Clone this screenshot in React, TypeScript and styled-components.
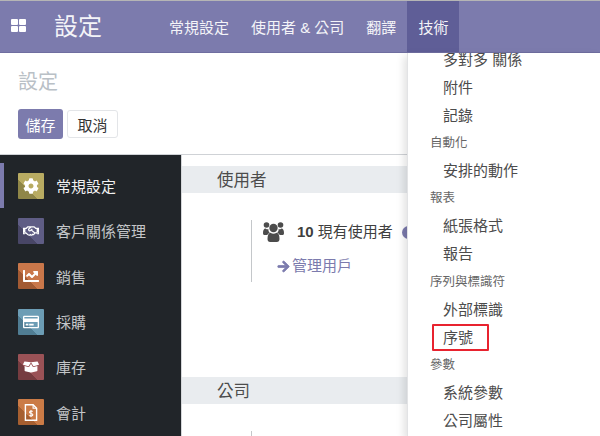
import React from 'react';
import styled, { createGlobalStyle } from 'styled-components';
import {
  FaArrowRight,
  FaBoxOpen,
  FaChartLine,
  FaCog,
  FaRegCreditCard,
  FaRegHandshake,
} from 'react-icons/fa';

const GlobalStyle = createGlobalStyle`
  html, body {
    margin: 0;
    padding: 0;
    background: #fff;
  }
  body {
    font-family: "Liberation Sans", "Noto Sans CJK TC", sans-serif;
    color: #4c4c4c;
  }
`;

const sidebarItems = [
  { label: '常規設定', tone: '#b8ab62', toneDark: '#8f8648', icon: <FaCog />, active: true },
  { label: '客戶關係管理', tone: '#5f5d85', toneDark: '#484666', icon: <FaRegHandshake /> },
  { label: '銷售', tone: '#c9774a', toneDark: '#a25a33', icon: <FaChartLine /> },
  { label: '採購', tone: '#6c9db5', toneDark: '#507d93', icon: <FaRegCreditCard /> },
  { label: '庫存', tone: '#9a5256', toneDark: '#763c40', icon: <FaBoxOpen /> },
  { label: '會計', tone: '#cb7b46', toneDark: '#a65f30', icon: <InvoiceIcon /> },
];

const menuEntries = [
  { label: '多對多 關係' },
  { label: '附件' },
  { label: '記錄' },
  { label: '自動化', header: true },
  { label: '安排的動作' },
  { label: '報表', header: true },
  { label: '紙張格式' },
  { label: '報告' },
  { label: '序列與標識符', header: true },
  { label: '外部標識' },
  { label: '序號', marked: true },
  { label: '參數', header: true },
  { label: '系統參數' },
  { label: '公司屬性' },
];

function InvoiceIcon() {
  return (
    <svg viewBox='0 0 20 24' width='14' height='17' fill='none'>
      <path d='M2 1h11l5 5v17H2z' stroke='#fff' strokeWidth='2' />
      <path d='M13 1v5h5' stroke='#fff' strokeWidth='1.6' />
      <path
        d='M12.5 10.5c-.6-.9-4.5-1.2-4.6 1 0 2.300 4.800 1.400 4.800 3.700 0 2.200-4 2-5 1M10 8.500v10'
        stroke='#fff'
        strokeWidth='1.500'
      />
    </svg>
  );
}

function AppsIcon() {
  return (
    <svg viewBox='0 0 15 13' width='15' height='13' fill='#fff'>
      <rect x='0' y='0' width='7' height='6' rx='1' />
      <rect x='8' y='0' width='7' height='6' rx='1' />
      <rect x='0' y='7' width='7' height='6' rx='1' />
      <rect x='8' y='7' width='7' height='6' rx='1' />
    </svg>
  );
}

function UsersIcon() {
  return (
    <svg viewBox='0 0 21 20' width='21' height='20' fill='#4c4c4c'>
      <circle cx='3.500' cy='3' r='2.800' />
      <circle cx='17.500' cy='3' r='2.800' />
      <path d='M0 11c0-3 1-4.500 2.500-4.500 1 .8 2 1 3 .8-.3 1.500.3 2.600 1.300 3.400-1 .4-2 1.200-2.500 2.300H1.200C.4 12.900 0 12.200 0 11z' />
      <path d='M21 11c0-3-1-4.500-2.500-4.500-1 .8-2 1-3 .8.300 1.500-.3 2.600-1.300 3.400 1 .4 2 1.200 2.500 2.300h3.100c.8-.1 1.200-.8 1.200-2z' />
      <circle cx='10.500' cy='6' r='4.200' />
      <path d='M4.500 17c0-4 1-6.200 3-6.300 1.800 1.300 4.200 1.300 6 0 2 .1 3 2.300 3 6.300 0 1.900-1 3-2.600 3H7.100c-1.600 0-2.600-1.100-2.600-3z' />
    </svg>
  );
}

const App = () => (
  <Page>
    <GlobalStyle />
    <NavBar>
      <AppsButton>
        <AppsIcon />
      </AppsButton>
      <Brand>設定</Brand>
      <NavMenu>
        <NavItem>常規設定</NavItem>
        <NavItem>使用者 &amp; 公司</NavItem>
        <NavItem>翻譯</NavItem>
        <NavItem $open>技術</NavItem>
      </NavMenu>
    </NavBar>

    <ControlPanel>
      <Breadcrumb>設定</Breadcrumb>
      <ButtonRow>
        <PrimaryButton>儲存</PrimaryButton>
        <SecondaryButton>取消</SecondaryButton>
      </ButtonRow>
    </ControlPanel>

    <Workspace>
      <Sidebar>
        {sidebarItems.map(item => (
          <SidebarRow key={item.label} $active={item.active}>
            <AppTile $tone={item.tone} $dark={item.toneDark}>
              {item.icon}
            </AppTile>
            <SidebarLabel $active={item.active}>{item.label}</SidebarLabel>
          </SidebarRow>
        ))}
      </Sidebar>
      <Main>
        <SectionTitle>使用者</SectionTitle>
        <UserBlock>
          <UserLine>
            <UsersIcon />
            <UserCount>
              <b>10</b> 現有使用者
            </UserCount>
            <CountDot />
          </UserLine>
          <ManageLink>
            <FaArrowRight />
            管理用戶
          </ManageLink>
        </UserBlock>
        <SectionTitle>公司</SectionTitle>
        <CompanyBlock />
      </Main>
    </Workspace>

    <Dropdown>
      {menuEntries.map(entry =>
        entry.header ? (
          <MenuHeader key={entry.label}>{entry.label}</MenuHeader>
        ) : (
          <MenuItem key={entry.label}>
            {entry.label}
            {entry.marked && <RedMark />}
          </MenuItem>
        ),
      )}
    </Dropdown>
  </Page>
);

export default App;

const Page = styled.div`
  position: relative;
  width: 600px;
  height: 436px;
  overflow: hidden;
  background: #fff;
  border-top: 1px solid #b5b5b5;
  box-sizing: border-box;
`;

const NavBar = styled.header`
  display: flex;
  align-items: center;
  height: 52px;
  box-sizing: border-box;
  background: #7c7bad;
  border-bottom: 1px solid #6f6ea0;
  color: #f4f4f8;
`;

const AppsButton = styled.div`
  display: flex;
  width: 54px;
  padding: 0 0 2px 11px;
  box-sizing: border-box;
`;

const Brand = styled.div`
  width: 104px;
  font-size: 24px;
  line-height: 52px;
`;

const NavMenu = styled.nav`
  display: flex;
  height: 100%;
`;

const NavItem = styled.div<{ $open?: boolean }>`
  display: flex;
  align-items: center;
  padding: 0 11px;
  font-size: 15px;
  white-space: nowrap;
  background: ${p => (p.$open ? '#5f5e97' : 'transparent')};
`;

const ControlPanel = styled.section`
  height: 102px;
  box-sizing: border-box;
  padding: 13px 18px 0;
  border-bottom: 1px solid #cfd2d6;
`;

const Breadcrumb = styled.div`
  font-size: 20px;
  line-height: 32px;
  color: #b9c0c6;
`;

const ButtonRow = styled.div`
  display: flex;
  gap: 4px;
  margin-top: 11px;
`;

const PrimaryButton = styled.button`
  width: 45px;
  height: 30px;
  padding: 0;
  border: 0;
  border-radius: 3px;
  background: #7c7bad;
  color: #fff;
  font: inherit;
  font-size: 15px;
`;

const SecondaryButton = styled.button`
  width: 51px;
  height: 28px;
  margin-top: 1px;
  padding: 0;
  border: 1px solid #e3e5e8;
  border-radius: 3px;
  background: #fff;
  color: #333;
  font: inherit;
  font-size: 15px;
`;

const Workspace = styled.div`
  display: flex;
  height: 282px;
`;

const Sidebar = styled.aside`
  width: 181px;
  flex: none;
  padding-top: 8px;
  box-sizing: border-box;
  background: #212529;
`;

const SidebarRow = styled.div<{ $active?: boolean }>`
  display: flex;
  align-items: center;
  height: 45.300px;
  padding-left: ${p => (p.$active ? '14px' : '18px')};
  border-left: ${p => (p.$active ? '4px solid #7c7bad' : '0')};
`;

const AppTile = styled.div<{ $tone: string; $dark: string }>`
  display: flex;
  align-items: center;
  justify-content: center;
  width: 26px;
  height: 26px;
  flex: none;
  border-radius: 1px;
  color: #fff;
  font-size: 16px;
  background: linear-gradient(45deg, ${p => p.$dark} 38%, ${p => p.$tone} 38%);
`;

const SidebarLabel = styled.span<{ $active?: boolean }>`
  margin-left: 12px;
  font-size: 15px;
  color: ${p => (p.$active ? '#f1f1f1' : '#c4c6c8')};
`;

const Main = styled.main`
  flex: 1;
  padding-top: 11px;
  border-left: 1px solid #d5d7da;
`;

const SectionTitle = styled.h2`
  height: 27px;
  margin: 0;
  padding-left: 35px;
  background: #e9ecef;
  color: #4c4c4c;
  font-size: 16.500px;
  font-weight: 400;
  line-height: 28px;
`;

const UserBlock = styled.div`
  height: 62px;
  margin: 27px 0 95px 69px;
  padding-left: 11px;
  border-left: 1px solid #c4c7ca;
`;

const UserLine = styled.div`
  display: flex;
  align-items: center;
  height: 24px;
`;

const UserCount = styled.span`
  margin-left: 13px;
  font-size: 15px;
  line-height: 22px;
  white-space: nowrap;
  color: #3f3f3f;
  b {
    font-weight: 700;
  }
`;

const CountDot = styled.span`
  flex: none;
  width: 13px;
  height: 13px;
  margin-left: 9px;
  border-radius: 50%;
  background: #7c7bad;
`;

const ManageLink = styled.a`
  display: flex;
  align-items: center;
  gap: 2px;
  margin: 11px 0 0 14px;
  font-size: 15px;
  line-height: 22px;
  color: #7c7bad;
  svg {
    width: 13px;
    height: 13px;
    stroke: currentColor;
    stroke-width: 30;
  }
`;

const CompanyBlock = styled.div`
  height: 40px;
  margin: 27px 0 0 69px;
  border-left: 1px solid #c4c7ca;
`;

const Dropdown = styled.div`
  position: absolute;
  top: 52px;
  right: 0;
  width: 193px;
  height: 384px;
  overflow: hidden;
  box-sizing: border-box;
  background: #fff;
  border-left: 1px solid #e2e3e5;
  box-shadow: -3px 3px 8px rgba(0, 0, 0, 0.12);
`;

const MenuItem = styled.div`
  position: relative;
  height: 28.100px;
  padding-left: 35px;
  font-size: 15px;
  line-height: 28px;
  color: #4c4c4c;
  white-space: nowrap;
  &:first-child {
    margin-top: -7px;
  }
`;

const MenuHeader = styled.div`
  height: 27px;
  padding-left: 22px;
  font-size: 12.500px;
  line-height: 27px;
  color: #666;
`;

const RedMark = styled.span`
  position: absolute;
  top: 0;
  left: 24px;
  width: 53px;
  height: 23px;
  border: 2px solid #e8232f;
  border-radius: 1px;
`;
